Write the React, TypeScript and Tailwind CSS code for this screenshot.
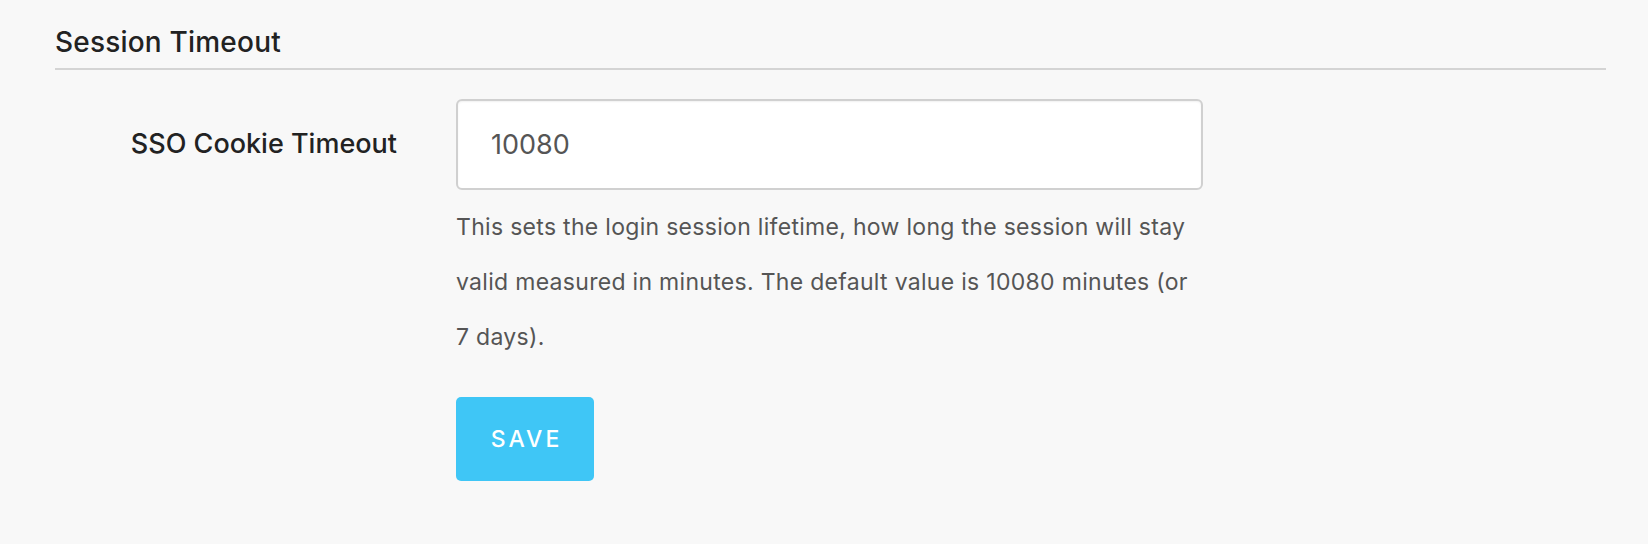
export default function App() {
  return (
    <div
      className="min-h-[544px] w-full bg-[#f8f8f8] pl-[55px] pr-[42px] pt-[25px] text-[#222]"
      style={{ fontFamily: "Inter, 'Noto Sans', sans-serif" }}
    >
      <div className="border-b-2 border-[#d4d4d4] pb-[9px]">
        <h2 className="text-[28px] font-medium leading-[34px] tracking-[0.2px]">Session Timeout</h2>
      </div>

      <div className="mt-[29px] flex items-start gap-[59px]">
        <label className="flex h-[91px] w-[342px] shrink-0 items-center justify-end text-[27px] font-medium text-[#222]">
          SSO Cookie Timeout
        </label>
        <div className="w-[747px]">
          <input
            type="text"
            defaultValue="10080"
            className="h-[91px] w-full rounded-[6px] border-2 border-[#d0d0d0] bg-white px-[33px] text-[27px] text-[#555] shadow-[inset_0_1px_2px_rgba(0,0,0,0.06)] outline-none"
          />
          <p className="mt-[10px] max-w-[736px] text-[23px] leading-[55px] tracking-[0.3px] text-[#555]">
            This sets the login session lifetime, how long the session will stay valid measured in
            minutes. The default value is 10080 minutes (or 7 days).
          </p>
          <button className="mt-[32px] h-[84px] w-[138px] rounded-[5px] bg-[#3fc6f6] pl-[3px] text-[23px] font-medium tracking-[3px] text-white">
            SAVE
          </button>
        </div>
      </div>
    </div>
  );
}
